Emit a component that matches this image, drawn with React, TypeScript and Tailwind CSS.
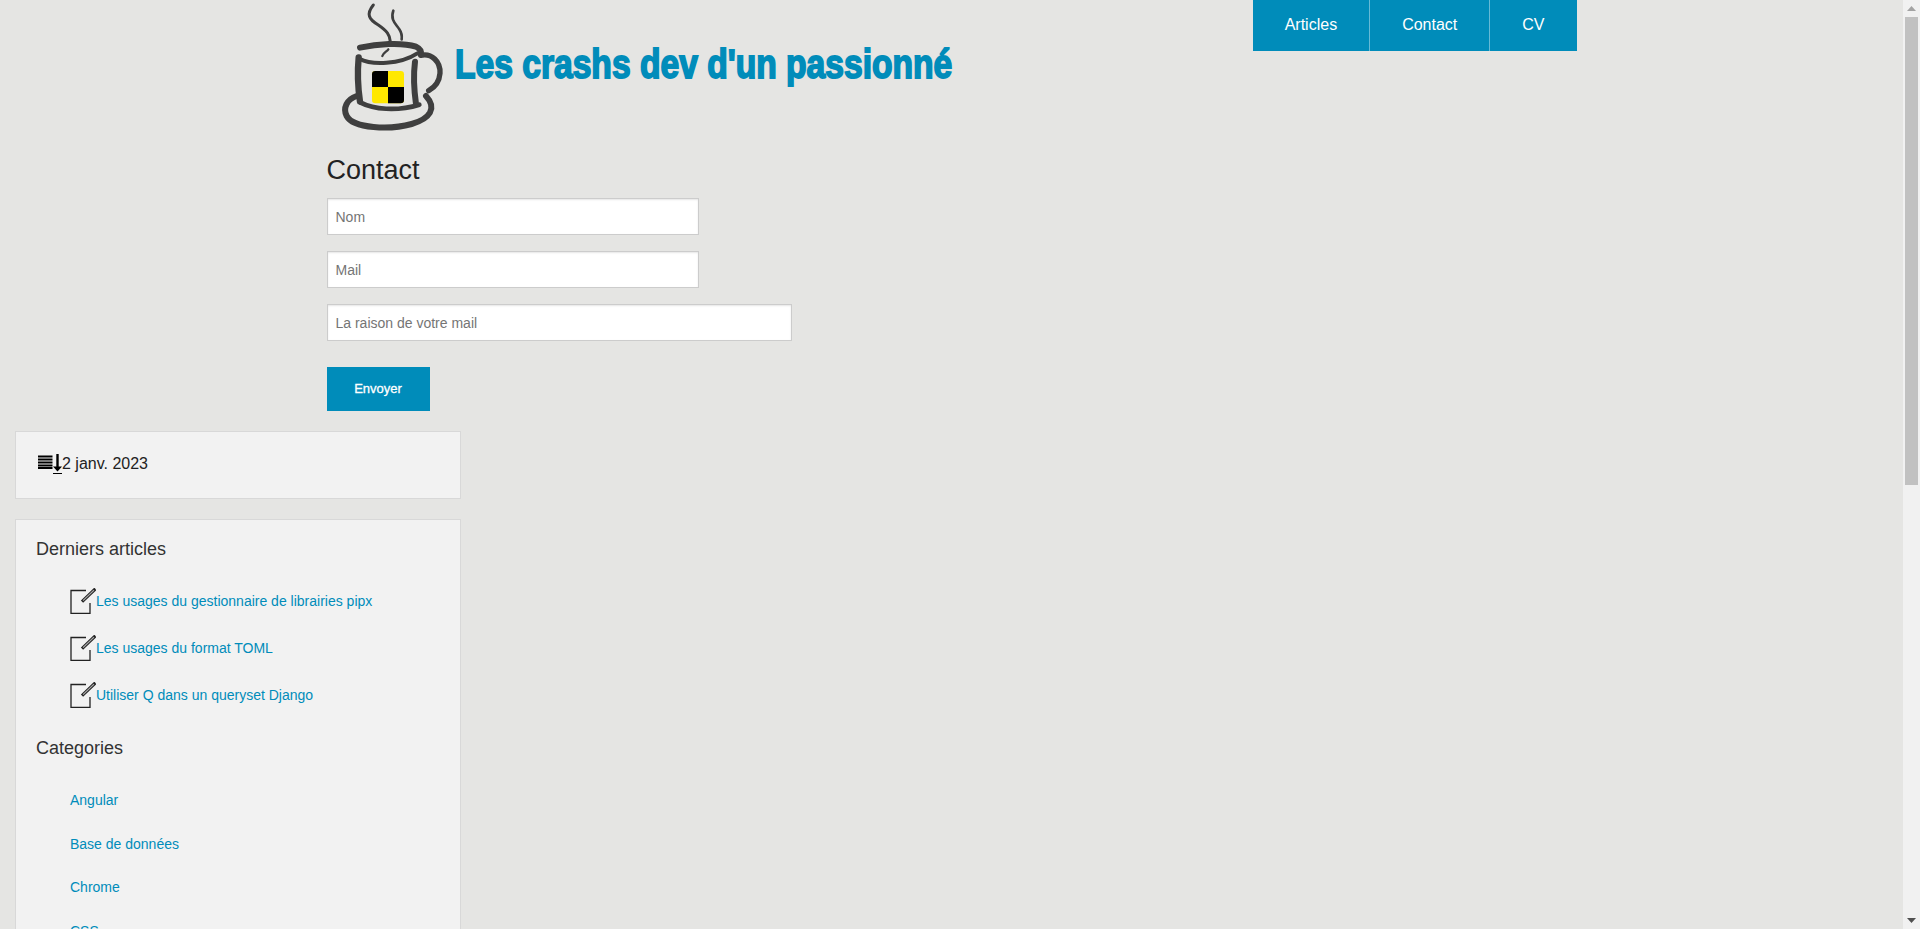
const PenIcon = () => (
  <svg width="26" height="26" viewBox="0 0 26 26" className="shrink-0" fill="none">
    <path d="M16 2.5H1V25.5H20V15" stroke="#222" strokeWidth="1.3" />
    <path d="M12 13.6L25.4 0.8" stroke="#222" strokeWidth="3.2" />
    <path d="M13 12.6L24 2.1" stroke="#aaa" strokeWidth="1.3" />
  </svg>
);

const SortIcon = () => (
  <svg width="24" height="20" viewBox="0 0 24 20" className="shrink-0" fill="none">
    <path d="M0 2.5H14.5M0 5.5H14.5M0 8.5H14.5M0 11.5H14.5M0 14H14.5" stroke="#000" strokeWidth="1.8" />
    <path d="M19.5 0V14" stroke="#000" strokeWidth="2.4" />
    <path d="M15 12.5H24L19.5 17.5Z" fill="#000" />
    <path d="M15 19.5H24" stroke="#000" strokeWidth="1" />
  </svg>
);

const Logo = () => (
  <svg width="130" height="135" viewBox="0 0 390 405" className="shrink-0" fill="none" stroke="#3f3f3f" strokeLinecap="round" strokeLinejoin="round">
    <path d="M130 15C108 42 116 58 145 75C170 92 180 105 181 125" strokeWidth="9" />
    <path d="M190 32C180 60 198 72 208 88C216 100 216 110 215 118" strokeWidth="8" />
    <path d="M175 148C170 155 160 158 157 168" strokeWidth="7" />
    <path d="M90 143C140 132 215 126 258 140C270 146 275 152 272 162" strokeWidth="18" />
    <path d="M88 176C125 196 210 194 262 160" strokeWidth="12" />
    <path d="M86 172C82 215 84 265 90 305" strokeWidth="19" />
    <path d="M255 185C250 225 252 270 258 312" strokeWidth="18" />
    <path d="M92 308C130 328 200 335 268 314" strokeWidth="14" />
    <path d="M272 166C305 158 332 185 330 220C328 245 315 262 296 272" strokeWidth="16" />
    <path d="M80 288C50 298 38 325 50 348C70 386 180 390 245 372C300 356 322 325 288 288" strokeWidth="18" />
    <rect x="126" y="213" width="96" height="97" rx="10" fill="#ffe800" stroke="none" />
    <path d="M136 213H174V261H126V223A10 10 0 0 1 136 213Z" fill="#000" stroke="none" />
    <path d="M174 261H222V300A10 10 0 0 1 212 310H174Z" fill="#000" stroke="none" />
  </svg>
);

const articles = ["Les usages du gestionnaire de librairies pipx", "Les usages du format TOML", "Utiliser Q dans un queryset Django"];
const categories = ["Angular", "Base de données", "Chrome", "CSS"];
const navItems = ["Articles", "Contact", "CV"];

export default function App() {
  return (
    <div className="flex h-[929px] overflow-hidden bg-[#e5e5e3] font-['Liberation_Sans',Arial,sans-serif]">
      <main className="w-[1903px] shrink-0">
        <div className="w-[1250px] mx-auto">
          <header className="flex justify-between items-start h-[150px]">
            <div className="flex items-start pl-[3px] pt-0">
              <Logo />
              <h1 className="ml-[-5px] mt-[41px] text-[40px] leading-[46px] font-bold text-[#008cba] whitespace-nowrap origin-left scale-x-[0.84] [-webkit-text-stroke:1.8px_#008cba]">
                Les crashs dev d'un passionné
              </h1>
            </div>
            <nav className="flex h-[51px] bg-[#008cba]">
              {navItems.map((n, i) => (
                <a key={n} className={`flex items-center px-[32px] pb-[2px] text-[16px] text-white ${i < 2 ? "border-r border-[#66bad6]" : ""}`}>{n}</a>
              ))}
            </nav>
          </header>
          <h3 className="text-[27px] leading-[40px] text-[#222]">Contact</h3>
          <form className="flex flex-col items-start mt-[8px]">
            <input placeholder="Nom" className="w-[372px] h-[37px] px-[8px] bg-white border border-[#ccc] text-[14px] shadow-[inset_0_1px_2px_rgba(0,0,0,0.1)] placeholder:text-[#757575]" />
            <input placeholder="Mail" className="w-[372px] h-[37px] mt-[16px] px-[8px] bg-white border border-[#ccc] text-[14px] shadow-[inset_0_1px_2px_rgba(0,0,0,0.1)] placeholder:text-[#757575]" />
            <input placeholder="La raison de votre mail" className="w-[465px] h-[37px] mt-[16px] px-[8px] bg-white border border-[#ccc] text-[14px] shadow-[inset_0_1px_2px_rgba(0,0,0,0.1)] placeholder:text-[#757575]" />
            <button type="button" className="w-[103px] h-[44px] mt-[26px] bg-[#008cba] text-white text-[13px] font-normal [-webkit-text-stroke:0.3px_white]">Envoyer</button>
          </form>
        </div>
        <aside className="w-[446px] ml-[15px] mt-[20px]">
          <div className="h-[68px] bg-[#f2f2f2] border border-[#d8d8d8] flex items-start pl-[22px] pt-[22px] text-[16px] leading-[20px] text-[#222]">
            <SortIcon />
            <span>2 janv. 2023</span>
          </div>
          <div className="mt-[20px] bg-[#f2f2f2] border border-[#d8d8d8] pl-[20px] h-[600px]">
            <h5 className="text-[18px] leading-[24px] text-[#333] mt-[17px]">Derniers articles</h5>
            <ul className="pl-[34px] mt-[27px]">
              {articles.map((a) => (
                <li key={a} className="flex items-start h-[47px]">
                  <PenIcon />
                  <a className="text-[14px] leading-[20px] text-[#008cba] mt-[3px]">{a}</a>
                </li>
              ))}
            </ul>
            <h5 className="text-[18px] leading-[24px] text-[#333] mt-[7px]">Categories</h5>
            <ul className="pl-[34px] mt-[30px]">
              {categories.map((c) => (
                <li key={c} className="h-[43.5px] text-[14px] leading-[20px] text-[#008cba]">{c}</li>
              ))}
            </ul>
          </div>
        </aside>
      </main>
      <div className="w-[17px] shrink-0 h-[929px] bg-[#f1f1f1] flex flex-col items-center">
        <div className="h-[17px] w-full flex items-center justify-center shrink-0">
          <svg width="9" height="5" viewBox="0 0 9 5"><path d="M4.5 0L9 5H0Z" fill="#a3a3a3" /></svg>
        </div>
        <div className="w-[13px] h-[468px] bg-[#c1c1c1] shrink-0" />
        <div className="flex-1" />
        <div className="h-[17px] w-full flex items-center justify-center shrink-0">
          <svg width="9" height="5" viewBox="0 0 9 5"><path d="M0 0H9L4.5 5Z" fill="#505050" /></svg>
        </div>
      </div>
    </div>
  );
}
